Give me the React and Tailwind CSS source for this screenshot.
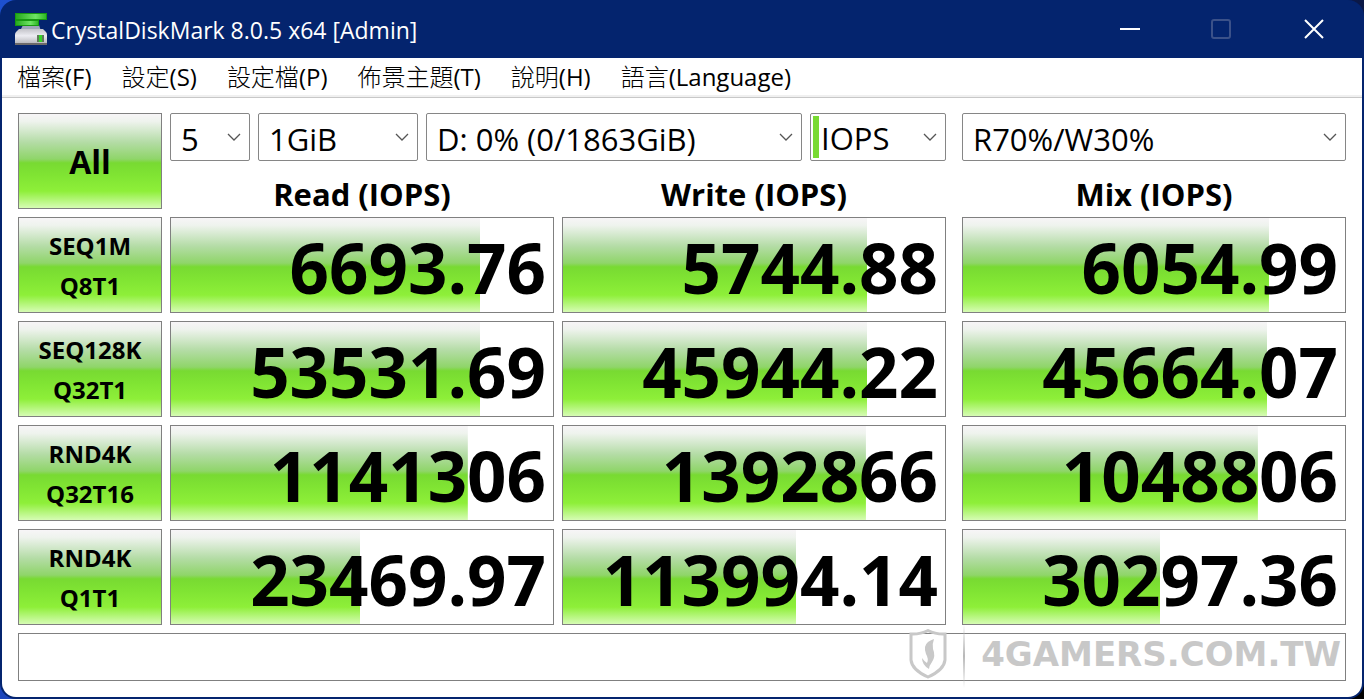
import React from "react";
import clsx from "clsx";

const menuItems = [
  { label: "檔案", hotkey: "(F)" },
  { label: "設定", hotkey: "(S)" },
  { label: "設定檔", hotkey: "(P)" },
  { label: "佈景主題", hotkey: "(T)" },
  { label: "說明", hotkey: "(H)" },
  { label: "語言", hotkey: "(Language)" },
];

const columns = ["Read", "Write", "Mix"];

const tests = [
  {
    name: "SEQ1M",
    queue: "Q8T1",
    results: [
      { value: "6693.76", percent: 80.9 },
      { value: "5744.88", percent: 79.6 },
      { value: "6054.99", percent: 80.1 },
    ],
  },
  {
    name: "SEQ128K",
    queue: "Q32T1",
    results: [
      { value: "53531.69", percent: 80.9 },
      { value: "45944.22", percent: 79.6 },
      { value: "45664.07", percent: 79.6 },
    ],
  },
  {
    name: "RND4K",
    queue: "Q32T16",
    results: [
      { value: "1141306", percent: 77.7 },
      { value: "1392866", percent: 79.3 },
      { value: "1048806", percent: 77.2 },
    ],
  },
  {
    name: "RND4K",
    queue: "Q1T1",
    results: [
      { value: "23469.97", percent: 49.5 },
      { value: "113994.14", percent: 61 },
      { value: "30297.36", percent: 51.6 },
    ],
  },
];

// glossy green used by the buttons and the meters
const gloss =
  "bg-[linear-gradient(to_bottom,#f7f5f7_0%,#eef3ed_8%,#b4dca6_30%,#8fd569_48%,#78da32_52%,#80e433_65%,#8eef39_82%,#d6fcb4_100%)]";

const DiskIcon = () => (
  <svg viewBox="0 0 32 32" className="size-8 shrink-0" aria-hidden="true">
    <defs>
      <linearGradient id="plate" x1="0" y1="0" x2="1" y2="0">
        <stop offset="0" stopColor="#25a81c" />
        <stop offset="0.65" stopColor="#6fe564" />
        <stop offset="1" stopColor="#2cb423" />
      </linearGradient>
      <linearGradient id="drive" x1="0" y1="0" x2="0" y2="1">
        <stop offset="0" stopColor="#c3c3c9" />
        <stop offset="0.45" stopColor="#ececf2" />
        <stop offset="1" stopColor="#b4b4b8" />
      </linearGradient>
    </defs>
    <path d="M8 12h16l2 6H5z" fill="#9fa6b8" />
    <rect x="0.500" y="0.500" width="31" height="6" fill="url(#plate)" stroke="#179a10" />
    <rect x="0.500" y="7.500" width="23" height="5" fill="url(#plate)" stroke="#179a10" />
    <path d="M4 16h24l3 3q1 1 1 3v9H0v-9q0-2 1-3z" fill="url(#drive)" />
    <path d="M0 30h32v2H0z" fill="#6d6a6a" />
    <rect x="22" y="22" width="7" height="7" fill="#5f7a58" />
    <rect x="24" y="22" width="3" height="7" fill="#36d42a" />
  </svg>
);

const TitleBar = () => (
  <header className="flex h-[58px] items-center pl-[13px] text-white">
    <DiskIcon />
    <h1 className="ml-1 flex-1 pt-0.5 text-[23px]">CrystalDiskMark 8.0.5 x64 [Admin]</h1>
    <button aria-label="Minimize" className="grid h-full w-[92px] place-items-center">
      <svg width="20" height="20" aria-hidden="true">
        <path d="M0 10h20" stroke="currentColor" strokeWidth="2" />
      </svg>
    </button>
    <button aria-label="Maximize" disabled className="grid h-full w-[90px] place-items-center text-[#3b5189]">
      <svg width="20" height="20" fill="none" aria-hidden="true">
        <rect x="1" y="1" width="18" height="18" rx="2" stroke="currentColor" strokeWidth="2" />
      </svg>
    </button>
    <button aria-label="Close" className="grid h-full w-24 place-items-center">
      <svg width="20" height="20" aria-hidden="true">
        <path d="M1 1l18 18M19 1L1 19" stroke="currentColor" strokeWidth="2" />
      </svg>
    </button>
  </header>
);

const Dropdown = ({ label, value, className, marked }) => (
  <div
    className={clsx(
      "grid h-12 grid-cols-[minmax(0,1fr)] rounded-xs border border-[#868686] bg-white",
      className,
    )}
  >
    <select
      aria-label={label}
      defaultValue={value}
      className={clsx(
        "col-start-1 row-start-1 appearance-none bg-transparent text-[31px] leading-10 outline-none",
        marked ? "m-0.5 border-l-6 border-[#78da32] pt-0.5 pl-0.5" : "pt-1 pl-2.5",
      )}
    >
      <option>{value}</option>
    </select>
    <svg
      width="14"
      height="8"
      fill="none"
      className="pointer-events-none col-start-1 row-start-1 mr-2 self-center justify-self-end"
      aria-hidden="true"
    >
      <path d="M1 1l6 6 6-6" stroke="#555" strokeWidth="1.3" />
    </svg>
  </div>
);

const Meter = ({ value, percent }) => (
  <div
    className={clsx(
      "h-24 border border-[#808080] bg-white bg-no-repeat pr-[7px] text-right text-[69px] leading-[98px] font-bold",
      gloss,
    )}
    style={{ backgroundSize: `${percent}% 100%` }}
  >
    {value}
  </div>
);

const Watermark = () => (
  <div className="pointer-events-none absolute right-1 -bottom-2 flex h-16 items-center text-[#c8c8c8]">
    <svg width="38" height="50" viewBox="0 0 38 50" fill="none" className="-mt-1" aria-hidden="true">
      <path
        d="M19 1.500Q27 5.500 36 5V31Q35 41 19 48Q3 41 2 31V5Q11 5.500 19 1.500z"
        stroke="currentColor"
        strokeWidth="3"
      />
      <path
        d="M25 10Q23 15 24 20Q27 27 23 33Q20 37 20 40Q13 36 13 29Q15 32 18 34Q20 30 17 25Q14 17 19 13Q22 11 25 10z"
        fill="currentColor"
      />
    </svg>
    <span className="ml-4 h-full w-0.5 bg-linear-to-b from-transparent via-[#b8b8b8] to-transparent" />
    <span className="ml-4 pb-1 font-['DejaVu_Sans'] text-[34px] leading-9 font-bold">4GAMERS.COM.TW</span>
  </div>
);

const App = () => {
  return (
    <div className="bg-[linear-gradient(120deg,#1d50cf_0%,#1a3aa8_45%,#000_100%)] font-['Open_Sans','Noto_Sans_CJK_TC',sans-serif] text-black">
      <div className="overflow-hidden rounded-2xl bg-[#04246e] px-0.5 pb-0.5">
        <TitleBar />

        <div className="rounded-b-[14px] bg-white">
          <nav className="flex h-10 items-center gap-[30px] border-b border-[#c8c8c8] pb-0.5 pl-[15px] text-2xl shadow-[inset_0_-2px_#f0f0f0]">
            {menuItems.map(({ label, hotkey }) => (
              <button key={label} className="whitespace-nowrap">
                <span className="font-light">{label}</span>
                {hotkey}
              </button>
            ))}
          </nav>

          <main className="px-4 pt-[15px] pb-4">
            <table className="w-full table-fixed border-collapse">
              <colgroup>
                <col className="w-36" />
                <col />
                <col />
                <col className="w-2" />
                <col />
              </colgroup>
              <thead>
                <tr>
                  <td rowSpan={2} className="p-0">
                    <button className={clsx("block h-24 w-full border border-[#808080] pt-0.5 text-[32px] font-bold", gloss)}>
                      All
                    </button>
                  </td>
                  <td colSpan={2} className="p-0 pl-2">
                    <div className="flex gap-2">
                      <Dropdown label="Test count" value="5" className="w-20" />
                      <Dropdown label="Test size" value="1GiB" className="w-40" />
                      <Dropdown label="Drive" value="D: 0% (0/1863GiB)" className="flex-1" />
                      <Dropdown label="Unit" value="IOPS" className="w-[136px]" marked />
                    </div>
                  </td>
                  <td colSpan={2} className="p-0 pl-4">
                    <Dropdown label="Mix ratio" value="R70%/W30%" />
                  </td>
                </tr>
                <tr className="h-12">
                  {columns.map((column, i) => (
                    <th
                      key={column}
                      scope="col"
                      colSpan={i === 2 ? 2 : 1}
                      className={clsx("p-0 pt-[18px] text-[31px] leading-7 font-bold", i === 2 ? "pl-4" : "pl-2")}
                    >
                      {column} (IOPS)
                    </th>
                  ))}
                </tr>
              </thead>
              <tbody>
                {tests.map((test) => (
                  <tr key={test.name + test.queue}>
                    <th scope="row" className="p-0 pt-2">
                      <button
                        className={clsx(
                          "block h-24 w-full border border-[#808080] pt-0.5 text-2xl leading-10 font-bold",
                          gloss,
                        )}
                      >
                        {test.name}
                        <br />
                        {test.queue}
                      </button>
                    </th>
                    {test.results.map((result, i) => (
                      <td
                        key={columns[i]}
                        colSpan={i === 2 ? 2 : 1}
                        className={clsx("p-0 pt-2", i === 2 ? "pl-4" : "pl-2")}
                      >
                        <Meter value={result.value} percent={result.percent} />
                      </td>
                    ))}
                  </tr>
                ))}
              </tbody>
            </table>

            <div className="relative mt-2 h-12 border border-[#808080]">
              <Watermark />
            </div>
          </main>
        </div>
      </div>
    </div>
  );
};

export default App;
